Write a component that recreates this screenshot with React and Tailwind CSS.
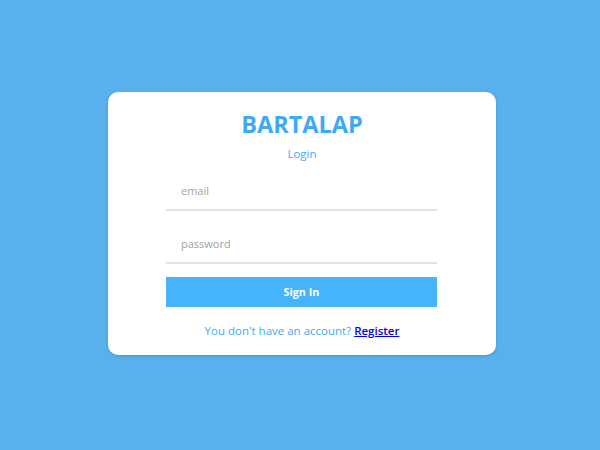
export default function App() {
  return (
    <div className="w-[600px] h-[450px] bg-[#58b0ec] flex items-start justify-center pt-[92px] pl-[4px]" style={{ fontFamily: '"Open Sans", sans-serif' }}>
      <div className="w-[388px] h-[263px] bg-white rounded-[10px] shadow-[0_1px_3px_rgba(0,0,0,0.15)] flex flex-col items-center pt-[16px]">
        <h1 className="text-[23.5px] leading-[32px] font-bold text-[#3fa9f5]">BARTALAP</h1>
        <div className="text-[11.5px] leading-[18px] text-[#3fa9f5] mt-[5px]">Login</div>
        <div className="w-[271px] mr-[1px] mt-[14px] flex flex-col">
          <input className="h-[34px] pb-[6px] border-b-2 border-[#e2e2e4] px-[15px] text-[11px] outline-none placeholder-[#a0a0a0]" placeholder="email" />
          <input className="h-[34px] pb-[6px] border-b-2 border-[#e2e2e4] px-[15px] text-[11px] outline-none placeholder-[#a0a0a0] mt-[19px]" placeholder="password" />
          <button className="h-[30px] mt-[13px] bg-[#45b4fc] text-white text-[10.8px] font-bold">Sign In</button>
        </div>
        <div className="mt-[15px] text-[11.5px] text-[#3fa9f5]">
          You don't have an account? <a href="#" className="text-[#0000ee] font-semibold underline">Register</a>
        </div>
      </div>
    </div>
  );
}
